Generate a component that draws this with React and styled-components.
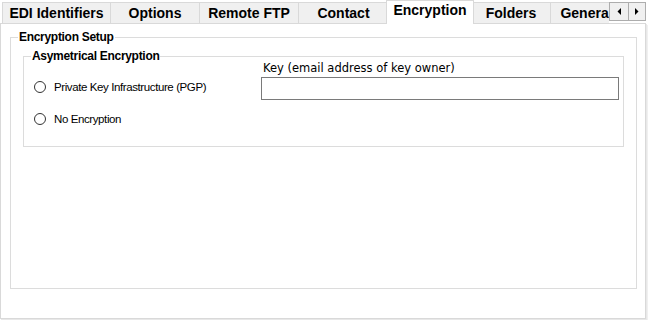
import styled, { createGlobalStyle } from "styled-components";

const GlobalStyle = createGlobalStyle`
  html, body {
    margin: 0;
    padding: 0;
    background: #ffffff;
  }
  #root {
    width: 648px;
    height: 320px;
    overflow: hidden;
  }
`;

const Window = styled.div`
  width: 648px;
  height: 320px;
  display: flex;
  flex-direction: column;
  font-family: "Liberation Sans", Arial, sans-serif;
  color: #000;
`;

const TabStrip = styled.div`
  width: 646px;
  height: 24px;
  margin-bottom: -1px;
  display: flex;
  position: relative;
  z-index: 1;
`;

const TabsViewport = styled.div`
  width: 609px;
  height: 24px;
  overflow: hidden;
  display: flex;
  align-items: flex-end;
  padding-left: 2px;
  box-sizing: border-box;
`;

const Tab = styled.div`
  flex: none;
  box-sizing: border-box;
  width: ${(p) => p.$w}px;
  height: ${(p) => (p.$active ? 24 : 21)}px;
  margin-left: ${(p) => (p.$active ? -3 : p.$first ? 0 : -1)}px;
  margin-right: ${(p) => (p.$active ? -2 : 0)}px;
  margin-bottom: ${(p) => (p.$active ? 0 : 1)}px;
  border: 1px solid #d9d9d9;
  border-bottom: none;
  background: ${(p) => (p.$active ? "#ffffff" : "#f0f0f0")};
  position: relative;
  z-index: ${(p) => (p.$active ? 2 : 0)};
  display: flex;
  align-items: center;
  justify-content: center;
  padding-bottom: ${(p) => (p.$active ? 5 : 0)}px;
  font-size: 14px;
  font-weight: bold;
  white-space: nowrap;
`;

const ScrollButtons = styled.div`
  display: flex;
  align-items: flex-start;
  padding-top: 2px;
`;

const ScrollButton = styled.div`
  box-sizing: border-box;
  width: ${(p) => p.$w}px;
  height: 19px;
  margin-left: ${(p) => (p.$first ? 0 : -1)}px;
  border: 1px solid #adadad;
  background: #f0f0f0;
  display: flex;
  align-items: center;
  justify-content: center;
`;

const Panel = styled.div`
  box-sizing: border-box;
  width: 646px;
  height: 296px;
  border: 1px solid #d9d9d9;
  background: #ffffff;
  box-shadow: 1px 1px 0 #e8e8e8, 2px 2px 0 #f0f0f0;
`;

const GroupBox = styled.fieldset`
  box-sizing: border-box;
  min-width: 0;
  width: ${(p) => p.$w}px;
  height: ${(p) => p.$h}px;
  margin: ${(p) => p.$top}px 0 0 ${(p) => p.$left}px;
  padding: 0;
  border: 1px solid #dcdcdc;
`;

const Caption = styled.legend`
  margin-left: 7px;
  padding: 0 1px;
  font-size: 12px;
  line-height: 14px;
  font-weight: bold;
  letter-spacing: -0.3px;
`;

const GroupBody = styled.div`
  display: flex;
`;

const RadioColumn = styled.div`
  width: 237px;
  box-sizing: border-box;
  padding: 16px 0 0 10px;
  display: flex;
  flex-direction: column;
  gap: 16px;
`;

const RadioRow = styled.label`
  height: 16px;
  display: flex;
  align-items: center;
  gap: 8px;
  font-size: 11.5px;
  letter-spacing: -0.4px;
`;

const RadioCircle = styled.span`
  box-sizing: border-box;
  width: 12px;
  height: 12px;
  border-radius: 50%;
  border: 1px solid #333333;
  background: #ffffff;
`;

const KeyColumn = styled.div`
  display: flex;
  flex-direction: column;
  margin-top: -2px;
`;

const KeyLabel = styled.div`
  padding-left: 2px;
  font-family: "DejaVu Sans", Verdana, sans-serif;
  font-size: 11.5px;
  line-height: 14px;
`;

const KeyInput = styled.input`
  box-sizing: border-box;
  width: 358px;
  height: 23px;
  margin: 2px 0 0 0;
  border: 1px solid #7a7a7a;
  background: #ffffff;
  outline: none;
`;

const Arrow = ({ dir }) => (
  <svg width="4" height="7" viewBox="0 0 4 7">
    {dir === "left" ? (
      <polygon points="4,0 4,7 0.5,3.5" fill="#000" />
    ) : (
      <polygon points="0,0 0,7 3.5,3.5" fill="#000" />
    )}
  </svg>
);

const tabs = [
  { label: "EDI Identifiers", w: 109 },
  { label: "Options", w: 90 },
  { label: "Remote FTP", w: 100 },
  { label: "Contact", w: 91 },
  { label: "Encryption", w: 88, active: true },
  { label: "Folders", w: 80 },
  { label: "General", w: 73 },
];

const App = () => {
  return (
    <>
      <GlobalStyle />
      <Window>
        <TabStrip>
          <TabsViewport>
            {tabs.map((t, i) => (
              <Tab key={t.label} $w={t.w} $active={t.active} $first={i === 0}>
                {t.label}
              </Tab>
            ))}
          </TabsViewport>
          <ScrollButtons>
            <ScrollButton $w={20} $first>
              <Arrow dir="left" />
            </ScrollButton>
            <ScrollButton $w={18}>
              <Arrow dir="right" />
            </ScrollButton>
          </ScrollButtons>
        </TabStrip>
        <Panel>
          <GroupBox $w={627} $h={259} $top={6} $left={9}>
            <Caption>Encryption Setup</Caption>
            <GroupBox $w={601} $h={98} $top={5} $left={12}>
              <Caption>Asymetrical Encryption</Caption>
              <GroupBody>
                <RadioColumn>
                  <RadioRow>
                    <RadioCircle />
                    Private Key Infrastructure (PGP)
                  </RadioRow>
                  <RadioRow>
                    <RadioCircle />
                    No Encryption
                  </RadioRow>
                </RadioColumn>
                <KeyColumn>
                  <KeyLabel>Key (email address of key owner)</KeyLabel>
                  <KeyInput type="text" />
                </KeyColumn>
              </GroupBody>
            </GroupBox>
          </GroupBox>
        </Panel>
      </Window>
    </>
  );
};

export default App;
